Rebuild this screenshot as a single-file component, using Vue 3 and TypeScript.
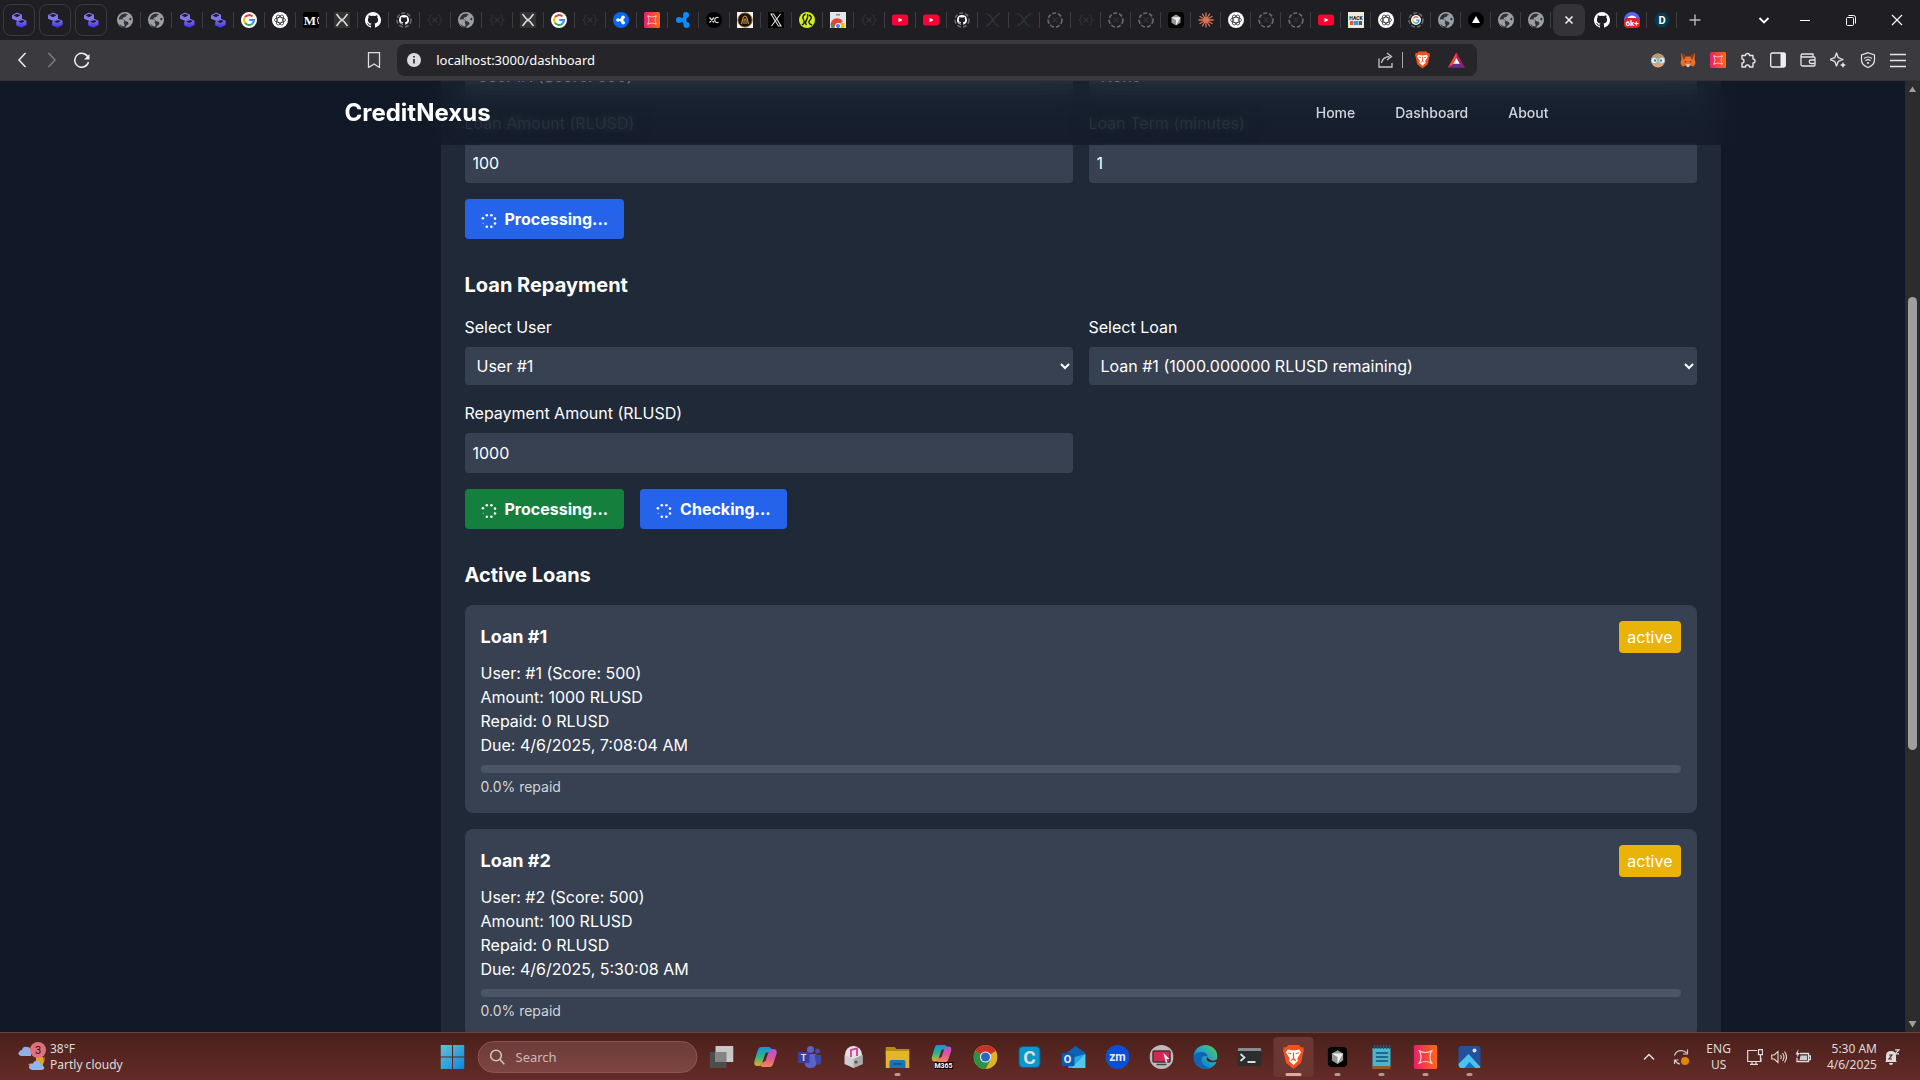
<script setup lang="ts">
import { ref } from 'vue'

interface Tab {
  icon: string
  label: string
  ring?: boolean
}

interface Loan {
  id: number
  user: number
  score: number
  amount: number
  repaid: number
  due: string
}

interface Glyph {
  text: string
  x: number
  y: number
  size: number
  fill: string
  family?: string
}

const t = (icon: string, label: string, ring = false): Tab => ({ icon, label, ring })

// Lettering that sits on top of some of the icon shapes
const glyphs: Record<string, Glyph> = {
  medium: { text: 'M', x: 7, y: 13, size: 13, fill: '#fff', family: 'Liberation Serif, serif' },
  hack: { text: 'HACK', x: 8, y: 8, size: 5, fill: '#111' },
  discord: { text: '6k+', x: 8, y: 14, size: 8, fill: '#fff' },
  devpost: { text: 'D', x: 8, y: 12, size: 11, fill: '#fff' },
  m365: { text: 'M365', x: 14, y: 23, size: 7, fill: '#fff' },
  teams: { text: 'T', x: 6, y: 16, size: 9, fill: '#ddd' },
  capp: { text: 'C', x: 12, y: 19, size: 19, fill: '#ddd' },
  outlook: { text: 'O', x: 6, y: 18, size: 11, fill: '#eee' },
  zoom: { text: 'zm', x: 12, y: 16, size: 12, fill: '#e8e8f0' },
}

const pinnedTabs: Tab[] = [t('stack', 'Pinned 1'), t('stack', 'Pinned 2'), t('stack', 'Pinned 3')]

const tabs: Tab[] = [
  t('globe', 'Site'), t('globe', 'Site'), t('stack', 'App'), t('stack', 'App'), t('google', 'Google'),
  t('openai', 'ChatGPT'), t('medium', 'Medium'), t('xgray', 'Explorer'), t('github', 'GitHub'),
  t('githubsmall', 'GitHub', true), t('braces', 'Docs'), t('globe', 'Site'), t('braces', 'Docs'),
  t('xgray', 'Explorer'), t('google', 'Google'), t('braces', 'Docs'), t('ripplecircle', 'Ripple'),
  t('gem', 'Wallet'), t('ripple', 'Ripple'), t('xc', 'Exchange'), t('lambda', 'Lambda'), t('xblack', 'X'),
  t('lime', 'Faucet'), t('webstore', 'Web Store'), t('braces', 'Docs'), t('youtube', 'YouTube'),
  t('youtube', 'YouTube'), t('githubsmall', 'GitHub', true), t('xfaint', 'XRPL'), t('xfaint', 'XRPL'),
  t('braces', 'Docs', true),
]

const narrowTabs: Tab[] = [
  t('braces', 'Docs'), t('braces', 'Docs', true), t('braces', 'Docs', true), t('cursor', 'Cursor'),
  t('claude', 'Claude'), t('openai', 'ChatGPT'), t('braces', 'Docs', true), t('braces', 'Docs', true),
  t('youtube', 'YouTube'), t('hack', 'Hackathon'), t('openai', 'ChatGPT'), t('googlesmall', 'Google', true),
  t('globe', 'Site'), t('vercel', 'Vercel'), t('globe', 'Site'), t('globe', 'Site'),
]

const trailingTabs: Tab[] = [t('github', 'GitHub'), t('discord', 'Discord'), t('devpost', 'Devpost')]

const extensions: Tab[] = [
  t('face', 'Profile helper'), t('fox', 'MetaMask'), t('gem', 'Gem wallet'), t('puzzle', 'Extensions'),
  t('sidebar', 'Sidebar'), t('wallet', 'Wallet'), t('sparkle', 'Leo'), t('vpn', 'VPN'), t('menu', 'Menu'),
]

const apps = [
  { icon: 'taskview', label: 'Task view', mark: '' },
  { icon: 'copilot', label: 'Copilot', mark: '' },
  { icon: 'teams', label: 'Teams', mark: '' },
  { icon: 'itunes', label: 'Music', mark: '' },
  { icon: 'folder', label: 'File Explorer', mark: 'dot' },
  { icon: 'm365', label: 'Microsoft 365', mark: '' },
  { icon: 'chrome', label: 'Chrome', mark: '' },
  { icon: 'capp', label: 'Camtasia', mark: '' },
  { icon: 'outlook', label: 'Outlook', mark: '' },
  { icon: 'zoom', label: 'Zoom', mark: '' },
  { icon: 'recorder', label: 'Recorder', mark: '' },
  { icon: 'edge', label: 'Edge', mark: '' },
  { icon: 'terminal', label: 'Terminal', mark: '' },
  { icon: 'brave', label: 'Brave', mark: 'current' },
  { icon: 'cursor', label: 'Cursor', mark: 'dot' },
  { icon: 'notepad', label: 'Notepad', mark: 'dot' },
  { icon: 'gem', label: 'Gem wallet', mark: 'dot' },
  { icon: 'photos', label: 'Photos', mark: 'dot' },
]

const loans: Loan[] = [
  { id: 1, user: 1, score: 500, amount: 1000, repaid: 0, due: '4/6/2025, 7:08:04 AM' },
  { id: 2, user: 2, score: 500, amount: 100, repaid: 0, due: '4/6/2025, 5:30:08 AM' },
]

const address = ref('localhost:3000/dashboard')
const loanAmount = ref(100)
const loanTerm = ref(1)
const repayAmount = ref(1000)

const percent = (loan: Loan): string => ((loan.repaid / loan.amount) * 100).toFixed(1)
</script>

<template>
  <div class="screen">
    <svg class="sprite" aria-hidden="true">
      <defs>
        <linearGradient id="g-stack" x1="0" y1="0" x2="0" y2="1"><stop offset="0" stop-color="#8f83f5" /><stop offset="1" stop-color="#3a2cf0" /></linearGradient>
        <linearGradient id="g-gem" x1="0" y1="0" x2="1" y2="0"><stop offset="0" stop-color="#e61e6e" /><stop offset="1" stop-color="#ff6a13" /></linearGradient>
        <linearGradient id="g-cop" x1="0" y1="0" x2="0" y2="1"><stop offset="0" stop-color="#1a8fe0" /><stop offset="0.5" stop-color="#2bb58a" /><stop offset="1" stop-color="#e0b020" /></linearGradient>
        <linearGradient id="g-cop2" x1="0" y1="0" x2="0" y2="1"><stop offset="0" stop-color="#a05be0" /><stop offset="0.5" stop-color="#e0559a" /><stop offset="1" stop-color="#f08a50" /></linearGradient>
        <linearGradient id="g-win" x1="0" y1="0" x2="1" y2="1"><stop offset="0" stop-color="#62c3d6" /><stop offset="1" stop-color="#0a86e0" /></linearGradient>
        <linearGradient id="g-edge" x1="0" y1="1" x2="1" y2="0"><stop offset="0" stop-color="#0c59a4" /><stop offset="0.5" stop-color="#1fa0d0" /><stop offset="1" stop-color="#55d04c" /></linearGradient>
      </defs>
      <symbol id="i-stack" viewBox="0 0 16 16">
        <path d="M1 3.300 6 .500l5 2.300v4L6.500 9 1 6.800z" fill="#8278ee" /><path d="M2.500 3.600 6 1.800l3.500 1.500L6 5.200z" fill="#1f1e23" />
        <path d="m5.200 9.800 1.300-.8L11 6.800l4.500 2V13l-5 2.700-5.300-2.200z" fill="url(#g-stack)" /><path d="m7 9.800 4-1.900 3 1.200-3.500 1.900z" fill="#1f1e23" />
      </symbol>
      <symbol id="i-globe" viewBox="0 0 16 16">
        <circle cx="8" cy="8" r="8" fill="#9aa0a6" /><path d="M8 1.500a6.500 6.500 0 0 0-6.300 6q3.500-.5 4.800.500 1.500 1.500 0 2.500l1 1.500v2.500q-3 0-5.500-3 2 5 6 5l1-2.500 2.500-2-.5-2-3-1q-.5-2-2.500-1.500l.5-2L8.500 5l.5-1.500 2-.5Q10 1.500 8 1.500z" fill="#2f3136" />
        <path d="M13 5.500l1.500 1-.5 2-2-1z" fill="#2f3136" />
      </symbol>
      <symbol id="i-google" viewBox="0 0 16 16"><circle cx="8" cy="8" r="8" fill="#fff" /><path d="M4 5.200A5 5 0 0 1 11.400 4.400" fill="none" stroke="#ea4335" stroke-width="2" /><path d="M4 5.200A5 5 0 0 0 4 10.800" fill="none" stroke="#fbbc05" stroke-width="2" /><path d="M4 10.800a5 5 0 0 0 7.400.9" fill="none" stroke="#34a853" stroke-width="2" /><path d="M8.200 8H13a5 5 0 0 1-1.600 3.700" fill="none" stroke="#4285f4" stroke-width="2" /></symbol>
      <symbol id="i-googlesmall" viewBox="0 0 16 16"><use href="#i-google" x="3" y="3" width="10" height="10" /></symbol>
      <symbol id="i-openai" viewBox="0 0 16 16"><circle cx="8" cy="8" r="8" fill="#fff" /><g fill="none" stroke="#222" stroke-width="0.700"><ellipse cx="8" cy="8" rx="5.500" ry="2.700" /><ellipse cx="8" cy="8" rx="5.500" ry="2.700" transform="rotate(60 8 8)" /><ellipse cx="8" cy="8" rx="5.500" ry="2.700" transform="rotate(120 8 8)" /></g></symbol>
      <symbol id="i-medium" viewBox="0 0 16 16"><rect width="16" height="16" rx="2" fill="#000" /><path d="M15.500 5q-2 3.500 0 7" stroke="#fff" fill="none" /></symbol>
      <symbol id="i-xgray" viewBox="0 0 16 16"><rect width="16" height="16" fill="#333" /><path d="M2.500 2 6 6.500q2 2 4 0L13.500 2M2.500 14 6 9.500q2-2 4 0l3.500 4.500" fill="none" stroke="#ddd" stroke-width="1.600" /></symbol>
      <symbol id="i-xfaint" viewBox="0 0 16 16"><path d="M1 2c2 0 5 2 7 6s4 6 6 6M15 1c-3 2-5 4-7 7s-4 5-7 6" fill="none" stroke="#29353a" stroke-width="1.600" /></symbol>
      <symbol id="i-github" viewBox="0 0 16 16"><path d="M8 0a8 8 0 0 0-2.500 15.600c.4.100.5-.2.500-.4v-1.500c-2.200.5-2.700-.9-2.700-.9-.4-1-.9-1.200-.9-1.200-.7-.5.100-.5.100-.5.800.100 1.200.8 1.200.8.7 1.200 1.900.9 2.300.7.100-.5.300-.9.500-1.100-1.800-.2-3.600-.9-3.600-4 0-.8.300-1.500.8-2.100-.1-.2-.4-1 .100-2.100 0 0 .7-.2 2.200.8a7.600 7.600 0 0 1 4 0c1.500-1 2.200-.8 2.200-.8.4 1.100.200 1.900.100 2.100.5.600.8 1.300.8 2.100 0 3.100-1.900 3.800-3.700 4 .3.200.6.700.6 1.500v2.200c0 .200.100.5.500.4A8 8 0 0 0 8 0z" fill="#fff" /></symbol>
      <symbol id="i-githubsmall" viewBox="0 0 16 16"><use href="#i-github" x="3" y="3" width="10" height="10" /></symbol>
      <symbol id="i-braces" viewBox="0 0 16 16"><path d="M4.500 3Q3 3 3 5t-2 3q2 1 2 3t1.500 2M11.500 3Q13 3 13 5t2 3q-2 1-2 3t-1.500 2M5.500 5.500l5 5M10.500 5.500l-5 5" fill="none" stroke="#2f3236" stroke-width="1.200" /></symbol>
      <symbol id="i-ripple" viewBox="0 0 16 16"><g fill="#0a8bff"><circle cx="4" cy="8" r="3" /><circle cx="11" cy="3" r="3" /><circle cx="11.500" cy="13" r="3" /><path d="M4 6.500h3l2.500-3 2 1.500V11l-2 2L7 9.500H4z" /></g></symbol>
      <symbol id="i-ripplecircle" viewBox="0 0 16 16"><circle cx="8" cy="8" r="8" fill="#0768f5" /><g fill="#fff"><circle cx="5" cy="8" r="1.800" /><circle cx="10" cy="5.200" r="1.800" /><circle cx="10.200" cy="10.800" r="1.800" /><path d="M5 7h2l2-2 1.500.500v5L9 11 7 9H5z" /></g></symbol>
      <symbol id="i-gem" viewBox="0 0 16 16"><rect width="16" height="16" rx="1.500" fill="url(#g-gem)" /><path d="M4 4q4 2 8 0-2 4 0 8-4-2-8 0 2-4 0-8z" fill="none" stroke="#fbd0cb" stroke-width="0.800" /><g fill="#fbd0cb"><circle cx="4" cy="4" r="0.700" /><circle cx="12" cy="4" r="0.700" /><circle cx="4" cy="12" r="0.700" /><circle cx="12" cy="12" r="0.700" /></g></symbol>
      <symbol id="i-xc" viewBox="0 0 16 16"><circle cx="8" cy="8" r="8" fill="#000" /><path d="m3.500 5.500 4.500 5M3.500 10.500l4.500-5M12.500 5.700a2.600 2.600 0 1 0 0 4.600" fill="none" stroke="#ddd" stroke-width="1.200" /></symbol>
      <symbol id="i-lambda" viewBox="0 0 16 16"><rect width="16" height="16" fill="#f4f4f4" /><circle cx="8" cy="8" r="7.200" fill="#15120d" stroke="#a87830" /><path d="m4.500 12 1.500-6q2-4 4 0l1.500 6M7 12V8q1-2 2 0v4" fill="none" stroke="#c8913e" stroke-width="1.100" /></symbol>
      <symbol id="i-xblack" viewBox="0 0 16 16"><rect width="16" height="16" fill="#000" /><path d="M3 2h2.600l7.400 12h-2.600zM12.500 2 3.500 14" fill="none" stroke="#ddd" stroke-width="1.100" /></symbol>
      <symbol id="i-lime" viewBox="0 0 16 16"><circle cx="8" cy="8" r="8" fill="#d4ee1c" /><path d="M6.500 2q-4 2-2 5.500T3 13M7.500 13q-2-2 0-5t1-6M10 3q4 2 1 5t2 5" fill="none" stroke="#1a1a1a" stroke-width="1.400" /></symbol>
      <symbol id="i-webstore" viewBox="0 0 16 16"><rect width="16" height="16" fill="#e4e6e8" /><rect x="6" y="2" width="4" height="1.500" fill="#888" /><path d="M1.500 16a6.500 6.500 0 0 1 11.300-6.500L8 13z" fill="#ea4335" /><path d="M8 11h6.500v5H8z" fill="#fbbc05" /><path d="M1.500 11.500 5 16H1.500z" fill="#34a853" /><circle cx="8" cy="14" r="2.600" fill="#4285f4" stroke="#fff" /></symbol>
      <symbol id="i-youtube" viewBox="0 0 16 16"><rect y="2.500" width="16" height="11" rx="2.500" fill="#ff0033" /><path d="m6.500 5.800 4 2.200-4 2.200z" fill="#fff" /></symbol>
      <symbol id="i-cursor" viewBox="0 0 16 16"><rect width="16" height="16" rx="3.500" fill="#050505" /><path d="m8 2.500 4.500 2.700v5.500L8 13.500l-4.500-2.800V5.200z" fill="#999" /><path d="M3.500 5.200h9L8 13.500V8z" fill="#eee" /></symbol>
      <symbol id="i-claude" viewBox="0 0 16 16"><path d="M8 .500v15M.500 8h15M4.200 1.500l7.600 13M11.800 1.500l-7.600 13M1.500 4.200l13 7.600M1.500 11.800l13-7.600" stroke="#d97757" stroke-width="1.300" /></symbol>
      <symbol id="i-hack" viewBox="0 0 16 16"><rect width="16" height="16" fill="#efeadb" /><path d="M2 9h3v4H2z" fill="#e4572e" /><path d="M5.500 9h5v4h-5z" fill="#2f9bd8" /><path d="M11 9h3v4h-3z" fill="#46606d" /></symbol>
      <symbol id="i-vercel" viewBox="0 0 16 16"><circle cx="8" cy="8" r="8" fill="#000" /><path d="m8 4 4 7H4z" fill="#fff" /></symbol>
      <symbol id="i-discord" viewBox="0 0 16 16"><circle cx="8" cy="8" r="8" fill="#5865f2" /><path d="M4 5q4-3 8 0v3H4z" fill="#fff" /><rect y="6" width="16" height="10" rx="4" fill="#e5202c" /></symbol>
      <symbol id="i-devpost" viewBox="0 0 16 16"><path d="M4 1h8l4 7-4 7H4L0 8z" fill="#003e54" /></symbol>
      <symbol id="i-face" viewBox="0 0 16 16"><circle cx="8" cy="8.500" r="7" fill="#d8a884" /><path d="M2 6q6-9 12 0z" fill="#b79a6a" /><g fill="#e8f4f7" stroke="#8a9a9e" stroke-width="0.800"><circle cx="4.300" cy="8.500" r="3.200" /><circle cx="11.700" cy="8.500" r="3.200" /></g><circle cx="5" cy="8.500" r="1.200" fill="#33879a" /><circle cx="11" cy="8.500" r="1.200" fill="#33879a" /></symbol>
      <symbol id="i-fox" viewBox="0 0 16 16"><path d="m1 1 5 3.500h4L15 1l-.5 6 1 3.500-1.500 4-4-1-1 1.500H7l-1-1.500-4 1-1.500-4 1-3.500z" fill="#e8702a" /><path d="m1 1 5 3.500L4 8zM15 1l-5 3.500L12 8z" fill="#8f3a12" /><path d="M6 12h4l-1 3H7z" fill="#d8c6b8" /><path d="m4.500 9 2 .5-1 1zM11.500 9l-2 .5 1 1z" fill="#222" /></symbol>
      <symbol id="i-puzzle" viewBox="0 0 16 16"><path d="M2 3.500h3.500a2 2 0 1 1 4 0H13V7a2 2 0 1 1 0 4v4H9.500a2 2 0 1 0-4 0H2v-4a2 2 0 1 0 0-4z" fill="none" stroke="#e6e6e6" stroke-width="1.400" stroke-linejoin="round" /></symbol>
      <symbol id="i-sidebar" viewBox="0 0 16 16"><rect x="0.700" y="1" width="14.600" height="14" rx="1.500" fill="none" stroke="#eee" stroke-width="1.300" /><path d="M10.500 1H15v14h-4.500z" fill="#eee" /></symbol>
      <symbol id="i-wallet" viewBox="0 0 16 16"><path d="M1 4v8.500A1.500 1.500 0 0 0 2.500 14H14a1 1 0 0 0 1-1V6a1 1 0 0 0-1-1H2.500A1.500 1.500 0 0 1 1 3.500 1.500 1.500 0 0 1 2.500 2H13v3M15 8h-4a1.600 1.600 0 0 0 0 3.500h4" fill="none" stroke="#e6e6e6" stroke-width="1.300" /></symbol>
      <symbol id="i-sparkle" viewBox="0 0 16 16"><path d="M6.500 1 8.300 5.700 13 7.500 8.300 9.300 6.500 14 4.700 9.300 0 7.500l4.700-1.800z" fill="none" stroke="#e6e6e6" stroke-width="1.300" stroke-linejoin="round" /><path d="m13 10 1 2 2 1-2 1-1 2-1-2-2-1 2-1z" fill="#e6e6e6" /></symbol>
      <symbol id="i-vpn" viewBox="0 0 16 16"><path d="m8 .700 6.500 2.300v5q0 5-6.500 7.500Q1.500 13 1.500 8V3z" fill="none" stroke="#e6e6e6" stroke-width="1.200" /><path d="M4 6.500q4-3 8 0M5.500 8.700q2.500-2 5 0" fill="none" stroke="#e6e6e6" stroke-width="1.200" /><circle cx="8" cy="11" r="1.100" fill="#e6e6e6" /></symbol>
      <symbol id="i-menu" viewBox="0 0 16 16"><path d="M0 2.500h16M0 8.500h16M0 14.500h16" stroke="#e6e6e6" stroke-width="1.400" /></symbol>
      <symbol id="i-brave" viewBox="0 0 16 16"><path d="M4.500 0h7L13 1.500h1.500L15 4l-.5 1L13 12l-5 4-5-4L1.500 5 1 4l.5-2.500H3z" fill="#f1501f" /><path d="m4 3 4 .7L12 3l1 2-2.500 4 .5 1.500L8 13.500 5 10.500 5.500 9 3 5z" fill="#fff" /><path d="m4.500 5.200 2 .6M11.500 5.200l-2 .6M8 5v4l-1.500 1.500M8 9l1.500 1.500" stroke="#f1501f" stroke-width="0.800" fill="none" /></symbol>
      <symbol id="i-bat" viewBox="0 0 16 16"><path d="m8 1 8 14H0z" fill="#9e1f63" /><path d="M8 1 0 15l8-5z" fill="#ff4724" /><path d="M0 15h16l-8-5z" fill="#662d91" /><path d="m8 6 3 5.500H5z" fill="#fff" /></symbol>
      <symbol id="i-taskview" viewBox="0 0 24 24"><rect x="0" y="7" width="17" height="16" fill="#4d4d4d" /><rect x="6" y="1" width="18" height="16" fill="#c8c8c8" /><rect x="6" y="7" width="11" height="10" fill="#858585" /></symbol>
      <symbol id="i-copilot" viewBox="0 0 24 24"><path d="M8 2h7q3 0 3.500 4L12 8l-3 9q-1 4-4 4H4q-4 0-3-5L4 6q1-4 4-4z" fill="url(#g-cop)" /><path d="M16 22H9q-2 0-3-3l6-3 3-9q1-3 4-3h1q4 0 3 5l-3 9q-1 4-4 4z" fill="url(#g-cop2)" /></symbol>
      <symbol id="i-m365" viewBox="0 0 24 24"><use href="#i-copilot" y="-2" width="24" height="21" /><rect x="5" y="17" width="19" height="7" fill="#050505" /></symbol>
      <symbol id="i-teams" viewBox="0 0 24 24"><circle cx="13" cy="4.500" r="3.500" fill="#5b62c8" /><circle cx="20" cy="6" r="2.500" fill="#454bb5" /><path d="M7 9h12v8q0 6-6 6t-6-6z" fill="#5b62c8" /><path d="M17 10h7v6q0 4-5 4z" fill="#4146a6" /><rect y="7" width="12" height="11" rx="1" fill="#393f9e" /></symbol>
      <symbol id="i-itunes" viewBox="0 0 24 24"><circle cx="12" cy="9.500" r="8.500" fill="#e4dfe8" /><path d="M9.500 12V5l6-1.500V11" fill="none" stroke="#d0408c" stroke-width="1.800" /><path d="m3 10 9 4 9-4v9l-9 4-9-4z" fill="#cfcfd1" /><path d="m12 14 9-4v9l-9 4z" fill="#aaaaad" /><circle cx="14.500" cy="17" r="1.600" fill="#555" /></symbol>
      <symbol id="i-folder" viewBox="0 0 24 24"><path d="M0 2h9l2 2h13v6H0z" fill="#b88a10" /><path d="M0 6h24v17H0z" fill="#e3b52c" /><path d="M4 17q0-2 2-2h12q2 0 2 2v6H4z" fill="#1a74b8" /><path d="M8 19h8" stroke="#0d4f86" stroke-width="1.500" /></symbol>
      <symbol id="i-chrome" viewBox="0 0 24 24"><circle cx="12" cy="12" r="12" fill="#e0b420" /><path d="M12 12 1.600 6a12 12 0 0 1 20.800 0z" fill="#c83228" /><path d="M12 12 1.600 6A12 12 0 0 0 12 24l5-9z" fill="#2a9147" /><circle cx="12" cy="12" r="5.600" fill="#eee" /><circle cx="12" cy="12" r="4.500" fill="#2a68c8" /></symbol>
      <symbol id="i-capp" viewBox="0 0 24 24"><rect x="1.500" y="1.500" width="21" height="21" rx="4" fill="#0a97c9" stroke="#0b5e85" /></symbol>
      <symbol id="i-outlook" viewBox="0 0 24 24"><path d="M5 8 14 1l10 7v14H7z" fill="#0c62b5" /><path d="m6 14 18-5v14H7z" fill="#29a8e0" /><path d="m24 9-14 14h14z" fill="#52c8ee" /><rect y="8" width="13" height="13" rx="1.500" fill="#0a5bb0" /></symbol>
      <symbol id="i-zoom" viewBox="0 0 24 24"><circle cx="12" cy="12" r="12" fill="#0b4ed8" /></symbol>
      <symbol id="i-recorder" viewBox="0 0 24 24"><circle cx="12" cy="12" r="12" fill="#bebabb" /><rect x="3.500" y="6" width="17" height="11" rx="1" fill="#d02a55" stroke="#40343a" stroke-width="1.500" /><path d="M7 19.500h10" stroke="#444" stroke-width="1.500" /><path d="m14 8 6 6h-3l1 4-2-1z" fill="#eee" /></symbol>
      <symbol id="i-edge" viewBox="0 0 24 24"><circle cx="12" cy="12" r="12" fill="url(#g-edge)" /><path d="M0 12Q2 7 8 7t6 5q-1-1-3-1-4 1-3 6 2 5 8 6A12 12 0 0 1 0 12z" fill="#0f65b4" /><path d="M14 12q-2 2 0 4t8 1l2 0v-3q-4 3-7 1t-3-3z" fill="#54231f" /></symbol>
      <symbol id="i-terminal" viewBox="0 0 24 24"><rect y="3" width="24" height="18" rx="1.500" fill="#2b2d2f" /><path d="M1.500 3h21A1.500 1.500 0 0 1 24 4.500V6H0V4.500A1.500 1.500 0 0 1 1.500 3z" fill="#8a8d90" /><path d="m3 9 4 3.500L3 16M10 17h8" fill="none" stroke="#ddd" stroke-width="1.800" /></symbol>
      <symbol id="i-notepad" viewBox="0 0 24 24"><path d="M3 3h18v19H3z" fill="#4bb4d2" /><path d="M3 21h18v3H3z" fill="#9a5a20" /><path d="M5 0v4M8 0v4M11 0v4M14 0v4M17 0v4M20 0v4" stroke="#1c5e78" stroke-width="1.500" /><path d="M7 8h11M7 12h11M7 16h11" stroke="#14506a" stroke-width="1.600" stroke-linecap="round" /></symbol>
      <symbol id="i-photos" viewBox="0 0 24 24"><rect x="1" y="1" width="22" height="22" rx="3" fill="#24509c" /><path d="M1 19 11 9l12 13-1 1H4q-3 0-3-4z" fill="#4cc3ee" /><path d="m7 23 5-6 6 6z" fill="#1274c8" /><circle cx="17" cy="5.500" r="2" fill="#ddd" /></symbol>
    </svg>

    <div class="tabstrip">
      <div class="pinned">
        <button v-for="(tab, i) in pinnedTabs" :key="i" class="pin" :aria-label="tab.label">
          <svg class="fav"><use :href="`#i-${tab.icon}`" /></svg>
        </button>
      </div>
      <button v-for="(tab, i) in tabs" :key="`a${i}`" class="tab" :aria-label="tab.label">
        <svg class="fav">
          <use :href="`#i-${tab.icon}`" />
          <circle v-if="tab.ring" class="ring" cx="8" cy="8" r="7" />
          <text v-if="glyphs[tab.icon]" :x="glyphs[tab.icon].x" :y="glyphs[tab.icon].y" :font-size="glyphs[tab.icon].size" :fill="glyphs[tab.icon].fill" :font-family="glyphs[tab.icon].family">{{ glyphs[tab.icon].text }}</text>
        </svg>
      </button>
      <button v-for="(tab, i) in narrowTabs" :key="`b${i}`" class="tab narrow" :aria-label="tab.label">
        <svg class="fav">
          <use :href="`#i-${tab.icon}`" />
          <circle v-if="tab.ring" class="ring" cx="8" cy="8" r="7" />
          <text v-if="glyphs[tab.icon]" :x="glyphs[tab.icon].x" :y="glyphs[tab.icon].y" :font-size="glyphs[tab.icon].size" :fill="glyphs[tab.icon].fill">{{ glyphs[tab.icon].text }}</text>
        </svg>
      </button>
      <button class="tab current" aria-label="Close tab">
        <svg class="fav" viewBox="0 0 16 16"><path d="m4.500 4.500 7 7m0-7-7 7" stroke="#eee" stroke-width="1.600" /></svg>
      </button>
      <button v-for="(tab, i) in trailingTabs" :key="`c${i}`" class="tab narrow" :aria-label="tab.label">
        <svg class="fav">
          <use :href="`#i-${tab.icon}`" />
          <text v-if="glyphs[tab.icon]" :x="glyphs[tab.icon].x" :y="glyphs[tab.icon].y" :font-size="glyphs[tab.icon].size" :fill="glyphs[tab.icon].fill">{{ glyphs[tab.icon].text }}</text>
        </svg>
      </button>
      <button class="newtab" aria-label="New tab">
        <svg class="fav" viewBox="0 0 16 16"><path d="M8 2.500v11M2.500 8h11" stroke="#b8b8ba" stroke-width="1.400" /></svg>
      </button>
      <div class="window-buttons">
        <button class="tab-search" aria-label="Search tabs"><svg class="fav" viewBox="0 0 16 16"><path d="m3.500 6 4.500 4.500L12.500 6" fill="none" stroke="#fff" stroke-width="1.800" /></svg></button>
        <button aria-label="Minimize"><svg class="fav" viewBox="0 0 16 16"><path d="M3 8.500h10" stroke="#fff" /></svg></button>
        <button aria-label="Restore"><svg class="fav" viewBox="0 0 16 16"><rect x="3.500" y="5.500" width="7" height="8" rx="1" fill="none" stroke="#fff" /><path d="M5.500 3.500h5q2 0 2 2v6" fill="none" stroke="#fff" /></svg></button>
        <button aria-label="Close"><svg class="fav" viewBox="0 0 16 16"><path d="m3 3 10 10M13 3 3 13" stroke="#fff" stroke-width="1.100" /></svg></button>
      </div>
    </div>

    <div class="toolbar">
      <div class="history">
        <button aria-label="Back"><svg class="nav-icon" viewBox="0 0 16 16"><path d="M11.500 1 5 8l6.500 7" fill="none" stroke="#eee" stroke-width="1.500" /></svg></button>
        <button aria-label="Forward"><svg class="nav-icon" viewBox="0 0 16 16"><path d="M4.500 1 11 8l-6.500 7" fill="none" stroke="#7d7c80" stroke-width="1.500" /></svg></button>
        <button aria-label="Reload"><svg class="nav-icon" viewBox="0 0 16 16"><path d="M14.500 6.500a7 7 0 1 0 0 3.500" fill="none" stroke="#eee" stroke-width="1.500" /><path d="M15.500 2v5.500H10z" fill="#eee" /></svg></button>
      </div>
      <button class="bookmark" aria-label="Bookmark"><svg class="nav-icon" viewBox="0 0 16 16"><path d="M2.500.700h11v14.800L8 12l-5.500 3.500z" fill="none" stroke="#ddd" stroke-width="1.300" /></svg></button>
      <div class="address">
        <svg class="info" viewBox="0 0 16 16"><circle cx="8" cy="8" r="7" fill="#dcdcde" /><path d="M8 7v4.500M8 4v1.500" stroke="#26252a" stroke-width="1.600" /></svg>
        <input v-model="address" type="text" aria-label="Address" />
        <svg class="share" viewBox="0 0 16 16"><path d="M1 6.500V15h13v-4M3.500 11q1-6 8-6.500M9 1l4.500 3.500L9 8" fill="none" stroke="#c4c4c6" stroke-width="1.300" /></svg>
        <span class="divider"></span>
        <svg class="shield"><use href="#i-brave" /></svg>
        <svg class="shield"><use href="#i-bat" /></svg>
      </div>
      <div class="extensions">
        <button v-for="ext in extensions" :key="ext.icon" :aria-label="ext.label"><svg class="fav"><use :href="`#i-${ext.icon}`" /></svg></button>
      </div>
    </div>

    <div class="viewport">
      <div class="page">
        <div class="glass"></div>
        <header class="site-header">
          <div class="site-inner">
            <a class="brand" href="#">CreditNexus</a>
            <nav>
              <a href="#home">Home</a>
              <a href="#dashboard">Dashboard</a>
              <a href="#about">About</a>
            </nav>
          </div>
        </header>

        <div class="columns">
          <aside class="gutter"></aside>
          <main class="panel">
            <section class="request">
              <div class="grid">
                <div class="field covered">
                  <select id="loan-user" aria-label="Borrower"><option>User #1 (Score: 500)</option></select>
                </div>
                <div class="field covered">
                  <select id="loan-type" aria-label="Guarantor"><option>None</option></select>
                </div>
                <div class="field covered">
                  <label for="loan-amount">Loan Amount (RLUSD)</label>
                  <input id="loan-amount" v-model="loanAmount" type="number" />
                </div>
                <div class="field covered">
                  <label for="loan-term">Loan Term (minutes)</label>
                  <input id="loan-term" v-model="loanTerm" type="number" />
                </div>
              </div>
              <div class="actions">
                <button class="btn blue"><svg class="spinner" viewBox="0 0 16 16"><g fill="#fff"><circle cx="5.800" cy="2.200" r="1.300" /><circle cx="10.400" cy="2.200" r="1.300" /><circle cx="1.900" cy="5.300" r="1.300" /><circle cx="14" cy="5.600" r="1.300" /><circle cx="14" cy="10.500" r="1.300" /><circle cx="10.400" cy="13.800" r="1.300" /><circle cx="5.800" cy="13.800" r="1.300" /><circle cx="2.200" cy="10.300" r="0.500" /></g></svg>Processing...</button>
              </div>
            </section>

            <section>
              <h2>Loan Repayment</h2>
              <div class="grid">
                <div class="field">
                  <label for="pay-user">Select User</label>
                  <select id="pay-user"><option>User #1</option></select>
                </div>
                <div class="field">
                  <label for="pay-loan">Select Loan</label>
                  <select id="pay-loan"><option>Loan #1 (1000.000000 RLUSD remaining)</option></select>
                </div>
                <div class="field">
                  <label for="pay-amount">Repayment Amount (RLUSD)</label>
                  <input id="pay-amount" v-model="repayAmount" type="number" />
                </div>
              </div>
              <div class="actions">
                <button v-for="b in [['green', 'Processing...'], ['blue', 'Checking...']]" :key="b[0]" class="btn" :class="b[0]"><svg class="spinner" viewBox="0 0 16 16"><g fill="#fff"><circle cx="5.800" cy="2.200" r="1.300" /><circle cx="10.400" cy="2.200" r="1.300" /><circle cx="1.900" cy="5.300" r="1.300" /><circle cx="14" cy="5.600" r="1.300" /><circle cx="14" cy="10.500" r="1.300" /><circle cx="10.400" cy="13.800" r="1.300" /><circle cx="5.800" cy="13.800" r="1.300" /><circle cx="2.200" cy="10.300" r="0.500" /></g></svg>{{ b[1] }}</button>
              </div>
            </section>

            <section>
              <h2>Active Loans</h2>
              <div class="loans">
                <article v-for="loan in loans" :key="loan.id" class="loan">
                  <div class="loan-head">
                    <h3>Loan #{{ loan.id }}</h3>
                    <span class="status">active</span>
                  </div>
                  <p>User: #{{ loan.user }} (Score: {{ loan.score }})</p>
                  <p>Amount: {{ loan.amount }} RLUSD</p>
                  <p>Repaid: {{ loan.repaid }} RLUSD</p>
                  <p>Due: {{ loan.due }}</p>
                  <div class="track"><div class="fill" :style="{ width: percent(loan) + '%' }"></div></div>
                  <p class="note">{{ percent(loan) }}% repaid</p>
                </article>
              </div>
            </section>
          </main>
        </div>
      </div>
      <div class="scrollbar" aria-hidden="true">
        <svg viewBox="0 0 15 16"><path d="M7.500 5.500 11 11H4z" /></svg>
        <div class="rail"><div class="thumb"></div></div>
        <svg viewBox="0 0 15 16"><path d="M7.500 11.500 11.500 5h-8z" /></svg>
      </div>
    </div>

    <footer class="taskbar">
      <div class="weather">
        <svg class="weather-icon" viewBox="0 0 28 30">
          <path d="M10 22a9 9 0 0 0 16-8q-1 8-9 7z" fill="#e08a1c" /><path d="M18 15h7v9h-7z" fill="#e3a02a" />
          <path d="M3 14q-4-1-2-4 1-2 3-2 1-4 5-3 4 0 4 4v5z" fill="#8fb0e4" /><path d="M14 28q-5-2-2-5 1-2 3-1 1-4 5-3 3 1 3 4 4 1 3 4l-2 1z" fill="#93b4ea" />
          <circle cx="20" cy="8" r="8" fill="#e0707c" /><text x="20" y="12" font-size="11" fill="#2a1210">3</text>
        </svg>
        <div class="weather-text"><span>38°F</span><span>Partly cloudy</span></div>
      </div>
      <div class="dock">
        <button class="start" aria-label="Start"><svg viewBox="0 0 24 24"><path d="M0 0h11.500v11.500H0zM12.500 0H24v11.500H12.500zM0 12.500h11.500V24H0zM12.500 12.500H24V24H12.500z" fill="url(#g-win)" /></svg></button>
        <label class="search">
          <svg viewBox="0 0 16 16"><circle cx="6.500" cy="6.500" r="5.300" fill="none" stroke="#ccc3c2" stroke-width="1.600" /><path d="m10.300 10.300 4.500 5" stroke="#ccc3c2" stroke-width="1.600" /></svg>
          <input type="text" placeholder="Search" aria-label="Search" />
        </label>
        <button v-for="app in apps" :key="app.label" class="app" :class="app.mark" :aria-label="app.label">
          <svg :class="{ small: app.icon === 'cursor' }">
            <use :href="`#i-${app.icon}`" />
            <text v-if="glyphs[app.icon]" :x="glyphs[app.icon].x" :y="glyphs[app.icon].y" :font-size="glyphs[app.icon].size" :fill="glyphs[app.icon].fill">{{ glyphs[app.icon].text }}</text>
          </svg>
        </button>
      </div>
      <div class="tray">
        <svg class="t16" viewBox="0 0 16 16"><path d="m3 10.500 5-5 5 5" fill="none" stroke="#ddd" stroke-width="1.500" /></svg>
        <svg class="t16 sync" viewBox="0 0 16 16"><path d="M1.500 6.500a7 7 0 0 1 12-2.500M14.500.500V5H10M1.500 15v-4H5.500M2 11q1.500 3.500 5 4" fill="none" stroke="#ccc" stroke-width="1.200" /><circle cx="12" cy="12" r="4" fill="#e08600" /></svg>
        <div class="lang"><span>ENG</span><span>US</span></div>
        <div class="status-icons">
          <svg class="t16" viewBox="0 0 16 16"><path d="M10 1.500H.700v11H14V9M3 15.300h8M5 13v2M9 13v2M11.500.700h4v5h-4zM13.500 6v6" fill="none" stroke="#ddd" stroke-width="1.200" /></svg>
          <svg class="t16" viewBox="0 0 16 16"><path d="M.700 6h2.500L7 2.500v11L3.200 10H.700zM9.500 6q1.500 2 0 4M11.500 4q3 4 0 8M13.500 2.500q4 5.500 0 11" fill="none" stroke="#ddd" stroke-width="1.100" /></svg>
          <svg class="t16" viewBox="0 0 16 16"><path d="M5 4.500h8.500v8H2V9M14 7h1.500v3.500H14" fill="none" stroke="#ddd" stroke-width="1.300" /><path d="M5.500 6.500H12v4.500H4.500z" fill="#ccc" /><path d="M3.500 0 .500 5.500h2L1.500 9 5 4H3z" fill="#ddd" /></svg>
        </div>
        <div class="clock"><span>5:30 AM</span><span>4/6/2025</span></div>
        <svg class="t16" viewBox="0 0 16 16"><path d="M2 12V7q0-5 5-5t5 5v5l1 1H1zM5 14h4q0 2-2 2t-2-2z" fill="#ddd" /><path d="M5 6h3l-3 4h3" fill="none" stroke="#5a2622" stroke-width="1.200" /><path d="M11 .800h4l-4 4h4" fill="none" stroke="#ddd" stroke-width="1.200" /></svg>
      </div>
    </footer>
  </div>
</template>

<style>
html,
body {
  margin: 0;
  background: #111827;
}
</style>

<style scoped>
* {
  box-sizing: border-box;
}
.screen {
  display: flex;
  flex-direction: column;
  height: 100vh;
  overflow: hidden;
  font-family: 'Noto Sans', 'Open Sans', sans-serif;
  font-size: 12px;
  color: #fff;
}
.sprite {
  position: absolute;
  width: 0;
  height: 0;
}
svg {
  display: block;
  flex: none;
}
svg text {
  font-family: Roboto, sans-serif;
  font-weight: 700;
  text-anchor: middle;
}
svg text[font-family] {
  font-family: 'Liberation Serif', serif;
}
button {
  padding: 0;
  border: 0;
  background: none;
  color: inherit;
  font: inherit;
}
input,
select {
  font: inherit;
  color: inherit;
}
a {
  color: inherit;
  text-decoration: none;
}
p,
h2,
h3 {
  margin: 0;
}
.fav,
.nav-icon,
.t16 {
  width: 16px;
  height: 16px;
}

/* tab strip */
.tabstrip {
  flex: none;
  display: flex;
  align-items: center;
  height: 40px;
  background: #1f1e23;
}
.pinned {
  display: flex;
  gap: 4px;
  padding: 0 3px;
}
.pin {
  display: grid;
  place-items: center;
  width: 32px;
  height: 32px;
  border: 1px solid #3a393e;
  border-radius: 8px;
}
.tab {
  display: grid;
  place-items: center;
  width: 31px;
  height: 16px;
  border-right: 1px solid #3c3b40;
}
.narrow {
  width: 30px;
}
.current {
  width: 32px;
  height: 32px;
  margin: 0 2px;
  border: 0;
  border-radius: 8px;
  background: #343338;
}
.ring {
  fill: none;
  stroke: #6c6c70;
  stroke-width: 1.5;
  stroke-dasharray: 4 2;
}
.newtab {
  margin-left: 10px;
}
.window-buttons {
  display: flex;
  margin-left: auto;
}
.window-buttons button {
  display: grid;
  place-items: center;
  width: 46px;
}
.window-buttons .tab-search {
  width: 36px;
}

/* address row */
.toolbar {
  flex: none;
  display: flex;
  align-items: center;
  height: 41px;
  background: #3b3a3f;
  border-bottom: 1px solid #333237;
}
.history {
  display: flex;
  gap: 14px;
  padding-left: 14px;
}
.bookmark {
  margin-left: auto;
  margin-right: 15px;
}
.address {
  display: flex;
  align-items: center;
  width: 1080px;
  max-width: 57%;
  height: 32px;
  padding: 0 12px 0 9px;
  border-radius: 8px;
  background: #26252a;
}
.address input {
  flex: 1;
  min-width: 0;
  margin-left: 14px;
  padding: 0;
  border: 0;
  outline: 0;
  background: none;
  font-size: 13px;
}
.info,
.share {
  width: 16px;
  height: 16px;
}
.divider {
  width: 1px;
  height: 16px;
  margin: 0 11px 0 8px;
  background: #aaa;
}
.shield {
  width: 17px;
  height: 18px;
  margin-right: 17px;
}
.shield:last-child {
  margin-right: 0;
}
.extensions {
  display: flex;
  gap: 14px;
  margin-left: 9vw;
  padding-right: 14px;
}

/* page */
.viewport {
  flex: 1;
  min-height: 0;
  display: flex;
  overflow: hidden;
  background: #111827;
}
.page {
  position: relative;
  flex: 1;
  min-width: 0;
  overflow: hidden;
  font-family: Inter, sans-serif;
  font-size: 16px;
  line-height: 24px;
}
.glass {
  position: absolute;
  z-index: 2;
  inset: 0 0 auto;
  height: 64px;
  background: linear-gradient(rgba(17, 25, 39, 0.5), rgba(17, 25, 39, 0.7));
}
.glass::before {
  content: '';
  position: absolute;
  inset: 3px 0 0;
  backdrop-filter: blur(12px);
}
.site-header {
  position: absolute;
  z-index: 4;
  inset: 0 0 auto;
  height: 64px;
}
.site-inner {
  display: flex;
  align-items: center;
  justify-content: space-between;
  max-width: 1280px;
  height: 64px;
  margin: 0 auto;
  padding: 0 32px;
}
.brand {
  font-size: 24px;
  line-height: 32px;
  font-weight: 700;
}
nav {
  display: flex;
  gap: 16px;
}
nav a {
  padding: 8px 12px;
  font-size: 14px;
  line-height: 20px;
  font-weight: 500;
  color: #d1d5db;
}
.columns {
  display: flex;
  justify-content: center;
}
.gutter {
  width: 256px;
}
.panel {
  flex: 1;
  max-width: 1280px;
  padding: 0 24px 24px;
  background: #1f2937;
}
.request {
  margin-top: -24px;
}
.grid {
  display: grid;
  grid-template-columns: 1fr 1fr;
  gap: 16px;
}
.field {
  display: flex;
  flex-direction: column;
  gap: 8px;
}
.field input,
.field select {
  width: 100%;
  padding: 8px;
  border: 0;
  border-radius: 4px;
  background: #374151;
}
.field input {
  height: 40px;
}
.field select {
  height: 38px;
}
.field input::-webkit-inner-spin-button {
  display: none;
}
.covered label {
  position: relative;
  z-index: 3;
  color: #28303b;
  text-shadow: 0 0 12px #35404b, 0 0 20px #35404b;
}
.covered select {
  color: #c4c9d2;
}
.actions {
  display: flex;
  gap: 16px;
  margin-top: 16px;
}
.btn {
  display: flex;
  align-items: center;
  gap: 8px;
  height: 40px;
  padding: 0 16px;
  border-radius: 4px;
  font-weight: 700;
}
.blue {
  background: #2563eb;
}
.green {
  background: #15803d;
}
.spinner {
  width: 16px;
  height: 16px;
  margin-top: 4px;
}
h2 {
  margin: 32px 0 16px;
  font-size: 20px;
  line-height: 28px;
  font-weight: 700;
}
.loans {
  display: flex;
  flex-direction: column;
  gap: 16px;
}
.loan {
  padding: 16px;
  border-radius: 8px;
  background: #374151;
}
.loan-head {
  display: flex;
  align-items: center;
  justify-content: space-between;
  margin-bottom: 8px;
}
h3 {
  font-size: 18px;
  line-height: 28px;
  font-weight: 700;
}
.status {
  padding: 4px 8px;
  border-radius: 4px;
  background: #eab308;
}
.track {
  height: 8px;
  margin: 8px 0 4px;
  border-radius: 4px;
  background: #4b5563;
  overflow: hidden;
}
.fill {
  height: 100%;
  background: #22c55e;
}
.note {
  font-size: 14px;
  line-height: 20px;
  color: #d1d5db;
}
.scrollbar {
  display: flex;
  flex-direction: column;
  width: 15px;
  background: #2c2c2c;
}
.scrollbar svg {
  width: 15px;
  height: 16px;
  fill: #9f9f9f;
}
.rail {
  flex: 1;
  display: flex;
  flex-direction: column;
  padding: 0 3px;
}
.rail::before {
  content: '';
  flex: 200;
}
.rail::after {
  content: '';
  flex: 266;
}
.thumb {
  flex: 453;
  border-radius: 5px;
  background: #9f9f9f;
}

/* taskbar */
.taskbar {
  flex: none;
  position: relative;
  display: flex;
  align-items: center;
  justify-content: space-between;
  height: 48px;
  border-top: 1px solid #6a4340;
  background: linear-gradient(#4a201c, #642b27);
  color: #ddd;
  line-height: 16px;
}
.weather {
  display: flex;
  align-items: center;
  gap: 4px;
  padding-left: 18px;
}
.weather-icon {
  width: 28px;
  height: 30px;
}
.weather-icon text {
  font-weight: 400;
}
.weather-text,
.lang,
.clock {
  display: flex;
  flex-direction: column;
}
.dock {
  position: absolute;
  left: 50%;
  translate: -50% 0;
  display: flex;
  align-items: center;
  padding-left: 12px;
}
.start svg {
  width: 24px;
  height: 24px;
}
.search {
  display: flex;
  align-items: center;
  gap: 10px;
  width: 220px;
  height: 32px;
  margin: 0 2px 0 13px;
  padding: 0 11px;
  border: 1px solid #8a5652;
  border-radius: 16px;
  background: linear-gradient(#6b3c39, #7f4540);
}
.search svg {
  width: 16px;
  height: 16px;
}
.search input {
  min-width: 0;
  flex: 1;
  padding: 0;
  border: 0;
  background: none;
  font-size: 13px;
}
.search input::placeholder {
  color: #cbb9b7;
  opacity: 1;
}
.app {
  position: relative;
  display: grid;
  place-items: center;
  width: 40px;
  height: 40px;
  margin: 0 2px;
  border-radius: 4px;
}
.app svg {
  width: 24px;
  height: 24px;
}
.app svg.small {
  width: 20px;
  height: 20px;
}
.dot::after,
.app.current::after {
  content: '';
  position: absolute;
  bottom: 1px;
  left: 17px;
  width: 6px;
  height: 3px;
  border-radius: 2px;
  background: #b09a98;
}
.app.current {
  width: 40px;
  height: 40px;
  background: #6b3733;
}
.app.current::after {
  left: 12px;
  width: 16px;
  background: #e3a896;
}
.tray {
  display: flex;
  align-items: center;
  padding-right: 20px;
}
.sync {
  margin: 0 17px 0 16px;
}
.lang {
  align-items: center;
}
.status-icons {
  display: flex;
  gap: 8px;
  margin: 0 16px;
}
.clock {
  align-items: flex-end;
  margin-right: 7px;
}
</style>
